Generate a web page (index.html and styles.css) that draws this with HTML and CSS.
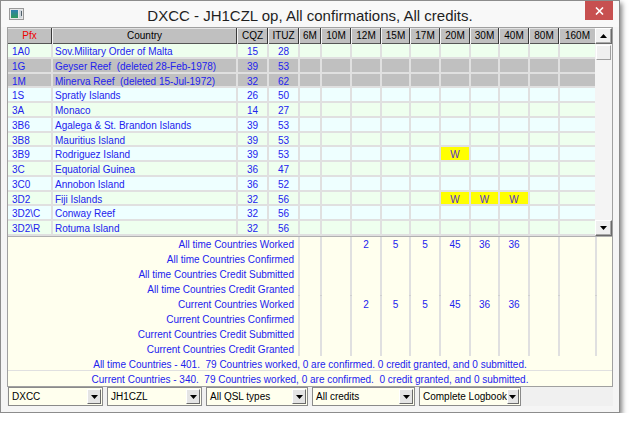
FILE: index.html
```html
<!DOCTYPE html>
<html>
<head>
<meta charset="utf-8">
<title>DXCC</title>
<link rel="stylesheet" href="styles.css">
</head>
<body>
<div class="window">
  <div class="titlebar">
    <svg class="appicon" width="15" height="12" viewBox="0 0 15 12">
      <defs>
        <linearGradient id="ig" x1="0" y1="0" x2="0" y2="1">
          <stop offset="0" stop-color="#2f7fb0"/>
          <stop offset="1" stop-color="#2f9a5a"/>
        </linearGradient>
      </defs>
      <rect x="0.5" y="0.5" width="14" height="11" fill="#e8e8e8" stroke="#9a9a9a"/>
      <rect x="2" y="2" width="7" height="8" fill="url(#ig)"/>
      <rect x="10" y="2" width="3" height="8" fill="#cfd6dc"/>
      <rect x="12" y="3" width="1" height="5" fill="#50606a"/>
    </svg>
    <div class="title">DXCC - JH1CZL op, All confirmations, All credits.</div>
    <div class="close"><svg width="9" height="8" viewBox="0 0 9 8"><path d="M1 0.5 L8 7.5 M8 0.5 L1 7.5" stroke="#fff" stroke-width="1.6"/></svg></div>
  </div>
  <div class="client">
    <div class="control">
      <div class="upper">
        <div class="gridwrap">
          <div class="hdr">
            <div class="h pfx">Pfx</div><div class="h">Country</div><div class="h">CQZ</div><div class="h">ITUZ</div><div class="h">6M</div><div class="h">10M</div><div class="h">12M</div><div class="h">15M</div><div class="h">17M</div><div class="h">20M</div><div class="h">30M</div><div class="h">40M</div><div class="h">80M</div><div class="h">160M</div>
          </div>
          <div class="rows">
            <div class="row g"><div class="c p">1A0</div><div class="c n">Sov.Military Order of Malta</div><div class="c m">15</div><div class="c m">28</div><div class="c"></div><div class="c"></div><div class="c"></div><div class="c"></div><div class="c"></div><div class="c"></div><div class="c"></div><div class="c"></div><div class="c"></div><div class="c"></div></div>
            <div class="row d"><div class="c p">1G</div><div class="c n">Geyser Reef  (deleted 28-Feb-1978)</div><div class="c m">39</div><div class="c m">53</div><div class="c"></div><div class="c"></div><div class="c"></div><div class="c"></div><div class="c"></div><div class="c"></div><div class="c"></div><div class="c"></div><div class="c"></div><div class="c"></div></div>
            <div class="row d"><div class="c p">1M</div><div class="c n">Minerva Reef  (deleted 15-Jul-1972)</div><div class="c m">32</div><div class="c m">62</div><div class="c"></div><div class="c"></div><div class="c"></div><div class="c"></div><div class="c"></div><div class="c"></div><div class="c"></div><div class="c"></div><div class="c"></div><div class="c"></div></div>
            <div class="row b"><div class="c p">1S</div><div class="c n">Spratly Islands</div><div class="c m">26</div><div class="c m">50</div><div class="c"></div><div class="c"></div><div class="c"></div><div class="c"></div><div class="c"></div><div class="c"></div><div class="c"></div><div class="c"></div><div class="c"></div><div class="c"></div></div>
            <div class="row g"><div class="c p">3A</div><div class="c n">Monaco</div><div class="c m">14</div><div class="c m">27</div><div class="c"></div><div class="c"></div><div class="c"></div><div class="c"></div><div class="c"></div><div class="c"></div><div class="c"></div><div class="c"></div><div class="c"></div><div class="c"></div></div>
            <div class="row b"><div class="c p">3B6</div><div class="c n">Agalega &amp; St. Brandon Islands</div><div class="c m">39</div><div class="c m">53</div><div class="c"></div><div class="c"></div><div class="c"></div><div class="c"></div><div class="c"></div><div class="c"></div><div class="c"></div><div class="c"></div><div class="c"></div><div class="c"></div></div>
            <div class="row g"><div class="c p">3B8</div><div class="c n">Mauritius Island</div><div class="c m">39</div><div class="c m">53</div><div class="c"></div><div class="c"></div><div class="c"></div><div class="c"></div><div class="c"></div><div class="c"></div><div class="c"></div><div class="c"></div><div class="c"></div><div class="c"></div></div>
            <div class="row b"><div class="c p">3B9</div><div class="c n">Rodriguez Island</div><div class="c m">39</div><div class="c m">53</div><div class="c"></div><div class="c"></div><div class="c"></div><div class="c"></div><div class="c"></div><div class="c w">W</div><div class="c"></div><div class="c"></div><div class="c"></div><div class="c"></div></div>
            <div class="row g"><div class="c p">3C</div><div class="c n">Equatorial Guinea</div><div class="c m">36</div><div class="c m">47</div><div class="c"></div><div class="c"></div><div class="c"></div><div class="c"></div><div class="c"></div><div class="c"></div><div class="c"></div><div class="c"></div><div class="c"></div><div class="c"></div></div>
            <div class="row b"><div class="c p">3C0</div><div class="c n">Annobon Island</div><div class="c m">36</div><div class="c m">52</div><div class="c"></div><div class="c"></div><div class="c"></div><div class="c"></div><div class="c"></div><div class="c"></div><div class="c"></div><div class="c"></div><div class="c"></div><div class="c"></div></div>
            <div class="row g"><div class="c p">3D2</div><div class="c n">Fiji Islands</div><div class="c m">32</div><div class="c m">56</div><div class="c"></div><div class="c"></div><div class="c"></div><div class="c"></div><div class="c"></div><div class="c w">W</div><div class="c w">W</div><div class="c w">W</div><div class="c"></div><div class="c"></div></div>
            <div class="row b"><div class="c p">3D2\C</div><div class="c n">Conway Reef</div><div class="c m">32</div><div class="c m">56</div><div class="c"></div><div class="c"></div><div class="c"></div><div class="c"></div><div class="c"></div><div class="c"></div><div class="c"></div><div class="c"></div><div class="c"></div><div class="c"></div></div>
            <div class="row g"><div class="c p">3D2\R</div><div class="c n">Rotuma Island</div><div class="c m">32</div><div class="c m">56</div><div class="c"></div><div class="c"></div><div class="c"></div><div class="c"></div><div class="c"></div><div class="c"></div><div class="c"></div><div class="c"></div><div class="c"></div><div class="c"></div></div>
          </div>
        </div>
        <div class="vscroll">
          <div class="sbtn"><svg width="7" height="4" viewBox="0 0 7 4"><path d="M0 4 L7 4 L3.5 0 Z" fill="#000"/></svg></div>
          <div class="thumb"></div>
          <div class="track"></div>
          <div class="sbtn"><svg width="7" height="4" viewBox="0 0 7 4"><path d="M0 0 L7 0 L3.5 4 Z" fill="#000"/></svg></div>
        </div>
      </div>
      <div class="summary">
        <div class="srow"><div class="s lbl">All time Countries Worked</div><div class="s"></div><div class="s"></div><div class="s">2</div><div class="s">5</div><div class="s">5</div><div class="s">45</div><div class="s">36</div><div class="s">36</div><div class="s"></div><div class="s"></div><div class="s"></div></div>
        <div class="srow"><div class="s lbl">All time Countries Confirmed</div><div class="s"></div><div class="s"></div><div class="s"></div><div class="s"></div><div class="s"></div><div class="s"></div><div class="s"></div><div class="s"></div><div class="s"></div><div class="s"></div><div class="s"></div></div>
        <div class="srow"><div class="s lbl">All time Countries Credit Submitted</div><div class="s"></div><div class="s"></div><div class="s"></div><div class="s"></div><div class="s"></div><div class="s"></div><div class="s"></div><div class="s"></div><div class="s"></div><div class="s"></div><div class="s"></div></div>
        <div class="srow sep"><div class="s lbl">All time Countries Credit Granted</div><div class="s"></div><div class="s"></div><div class="s"></div><div class="s"></div><div class="s"></div><div class="s"></div><div class="s"></div><div class="s"></div><div class="s"></div><div class="s"></div><div class="s"></div></div>
        <div class="srow"><div class="s lbl">Current Countries Worked</div><div class="s"></div><div class="s"></div><div class="s">2</div><div class="s">5</div><div class="s">5</div><div class="s">45</div><div class="s">36</div><div class="s">36</div><div class="s"></div><div class="s"></div><div class="s"></div></div>
        <div class="srow"><div class="s lbl">Current Countries Confirmed</div><div class="s"></div><div class="s"></div><div class="s"></div><div class="s"></div><div class="s"></div><div class="s"></div><div class="s"></div><div class="s"></div><div class="s"></div><div class="s"></div><div class="s"></div></div>
        <div class="srow"><div class="s lbl">Current Countries Credit Submitted</div><div class="s"></div><div class="s"></div><div class="s"></div><div class="s"></div><div class="s"></div><div class="s"></div><div class="s"></div><div class="s"></div><div class="s"></div><div class="s"></div><div class="s"></div></div>
        <div class="srow"><div class="s lbl">Current Countries Credit Granted</div><div class="s"></div><div class="s"></div><div class="s"></div><div class="s"></div><div class="s"></div><div class="s"></div><div class="s"></div><div class="s"></div><div class="s"></div><div class="s"></div><div class="s"></div></div>
      </div>
      <div class="footer">
        <div class="frow">All time Countries - 401.  79 Countries worked, 0 are confirmed. 0 credit granted, and 0 submitted.</div>
        <div class="frow">Current Countries - 340.  79 Countries worked, 0 are confirmed.  0 credit granted, and 0 submitted.</div>
      </div>
    </div>
    <div class="bottombar">
      <div class="combo c1"><span class="ctext">DXCC</span><span class="dbtn"><svg width="7" height="4" viewBox="0 0 7 4"><path d="M0 0 L7 0 L3.5 4 Z" fill="#000"/></svg></span></div>
      <div class="combo c2"><span class="ctext">JH1CZL</span><span class="dbtn"><svg width="7" height="4" viewBox="0 0 7 4"><path d="M0 0 L7 0 L3.5 4 Z" fill="#000"/></svg></span></div>
      <div class="combo c3"><span class="ctext">All QSL types</span><span class="dbtn"><svg width="7" height="4" viewBox="0 0 7 4"><path d="M0 0 L7 0 L3.5 4 Z" fill="#000"/></svg></span></div>
      <div class="combo c4"><span class="ctext">All credits</span><span class="dbtn"><svg width="7" height="4" viewBox="0 0 7 4"><path d="M0 0 L7 0 L3.5 4 Z" fill="#000"/></svg></span></div>
      <div class="combo c5"><span class="ctext">Complete Logbook</span><span class="dbtn"><svg width="7" height="4" viewBox="0 0 7 4"><path d="M0 0 L7 0 L3.5 4 Z" fill="#000"/></svg></span></div>
    </div>
  </div>
</div>
</body>
</html>
```

FILE: styles.css
```css
* { box-sizing: border-box; }
html, body { margin: 0; padding: 0; background: #ffffff; }
body { font-family: "Liberation Sans", Arial, sans-serif; font-size: 10px; }

.window {
  width: 620px;
  height: 413px;
  border: 1px solid #8c8c8c;
  background: #f5f5f5;
  box-shadow: 2px 3px 5px rgba(0, 0, 0, 0.5);
  display: flex;
  flex-direction: column;
}

.titlebar {
  flex: none;
  height: 26px;
  display: grid;
  grid-template-columns: 1fr auto 1fr;
  align-items: start;
  background: #f8f8f8;
}
.appicon { justify-self: start; margin: 7px 0 0 8px; }
.title {
  font-size: 15px;
  line-height: 18px;
  padding-top: 6px;
  color: #1e1e1e;
  white-space: nowrap;
}
.close {
  justify-self: end;
  width: 28px;
  height: 19px;
  margin-right: 6px;
  background: #c75050;
  display: flex;
  align-items: center;
  justify-content: center;
}

.client {
  flex: 1;
  padding: 0 6px;
  display: flex;
  flex-direction: column;
}

.control {
  height: 360px;
  border: 1px solid #a0a0a0;
  display: flex;
  flex-direction: column;
  background: #fff;
}

.upper { height: 208px; display: flex; flex: none; }
.gridwrap { width: 587px; display: flex; flex-direction: column; }

.hdr, .row {
  display: grid;
  grid-template-columns: 43px 183px 29px 29px 20px 28px 28px 27px 28px 28px 27px 28px 28px 35px;
  column-gap: 2px;
}
.hdr { height: 16px; background: #c0c0c0; flex: none; }
.h {
  height: 16px;
  line-height: 16px;
  text-align: center;
  color: #000;
  white-space: nowrap;
  box-shadow: inset 0 -1px 0 #555555, inset 0 1px 0 #e4e4e4, 1px 0 0 #3a3a3a, 2px 0 0 #f4f4f4;
}
.h.pfx { color: #ee0000; }

.rows {
  height: 192px;
  overflow: hidden;
  display: flex;
  flex-direction: column;
  row-gap: 2px;
  background: #e0e0e0;
}
.row { flex: none; background: #e0e0e0; }
.c {
  height: 12.75px;
  line-height: 16.5px;
  color: #2222ee;
  white-space: pre;
  text-align: center;
}
.c.p { text-align: left; padding-left: 4px; }
.c.n { text-align: left; padding-left: 2px; }
.row.g .c { background: #eeffee; }
.row.b .c { background: #eeffff; }
.row.d .c { background: #c0c0c0; }
.row .c.w { background: #ffff00; color: #5533cc; }

.vscroll {
  width: 17px;
  display: flex;
  flex-direction: column;
  background: #f4f4f4;
}
.sbtn {
  flex: none;
  height: 16px;
  background: #f0f0f0;
  border: 1px solid;
  border-color: #ffffff #6a6a6a #6a6a6a #ffffff;
  box-shadow: inset -1px -1px 0 #a8a8a8;
  display: flex;
  align-items: center;
  justify-content: center;
}
.thumb {
  flex: none;
  height: 15px;
  margin: 1px 1px 0 1px;
  background: #f0f0f0;
  border: 1px solid;
  border-color: #ffffff #a0a0a0 #a0a0a0 #ffffff;
}
.track { flex: 1; }

.summary {
  height: 120px;
  flex: none;
  border-top: 1px solid #b0b0b0;
  border-bottom: 1px solid #e0e0e0;
  background: #e0e0e0;
  display: flex;
  flex-direction: column;
  row-gap: 2px;
}
.srow {
  display: grid;
  grid-template-columns: 290px 20px 28px 28px 27px 28px 28px 27px 28px 28px 35px 15px;
  column-gap: 2px;
  height: 13px;
}
.srow.sep { box-shadow: 0 1px 0 #d0d0d0; }
.s {
  background: #ffffee;
  color: #2222ee;
  line-height: 16px;
  text-align: center;
  white-space: nowrap;
}
.s.lbl { text-align: right; padding-right: 4px; }

.footer { flex: 1; background: #ffffee; display: flex; flex-direction: column; }
.frow {
  height: 15px;
  line-height: 17px;
  text-align: center;
  color: #2222ee;
  white-space: pre;
}
.frow:first-child { border-bottom: 1px solid #e0e0e0; }

.bottombar {
  flex: none;
  display: flex;
  column-gap: 4px;
  padding-left: 1px;
  background: #f0f0f0;
}
.combo {
  height: 19px;
  border: 1px solid #8a8a8a;
  background: #ffffee;
  display: flex;
  align-items: center;
  justify-content: space-between;
}
.c1, .c2 { width: 95px; }
.c3, .c5 { width: 102px; }
.c4 { width: 103px; }
.ctext { padding-left: 3px; color: #000; white-space: nowrap; }
.dbtn {
  width: 14px;
  height: 15px;
  margin-right: 1px;
  background: #e4e4e4;
  border: 1px solid;
  border-color: #ffffff #6a6a6a #6a6a6a #ffffff;
  display: flex;
  align-items: center;
  justify-content: center;
}
```
